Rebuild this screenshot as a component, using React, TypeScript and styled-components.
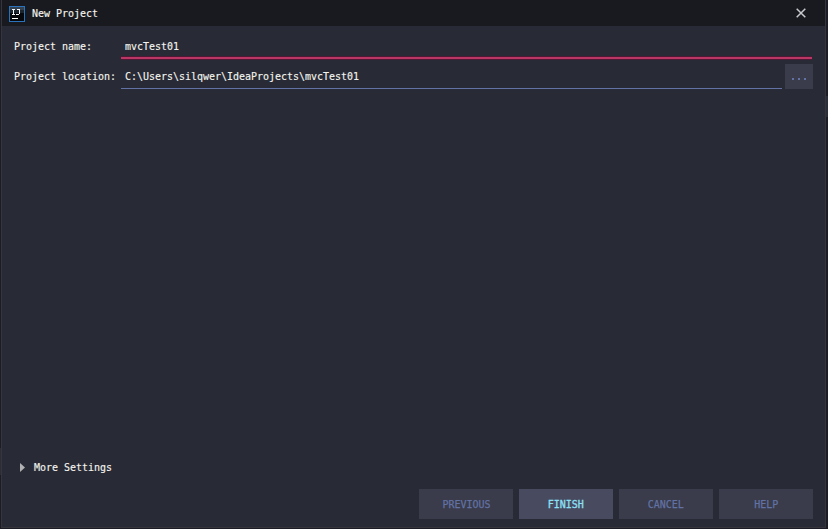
import React from "react";
import styled, { createGlobalStyle } from "styled-components";

const GlobalStyle = createGlobalStyle`
  *, *::before, *::after { box-sizing: border-box; }
  body { margin: 0; background: #1b1c25; overflow: hidden; }
`;

const Desktop = styled.div`
  width: 828px;
  height: 529px;
  display: grid;
  grid-template-columns: 1px 825px 2px;
  background: #1b1c25;
  font-family: "DejaVu Sans Mono", monospace;
  font-size: 11px;
  line-height: 16px;
  color: #f4f4ee;
`;

const Strip = styled.div<{ $top: number; $height: number }>`
  padding-top: ${(p) => p.$top}px;
  &::before {
    content: "";
    display: block;
    height: ${(p) => p.$height}px;
    background: #2b2d38;
  }
`;

const Dialog = styled.main`
  height: 528px;
  display: flex;
  flex-direction: column;
  border: 1px solid #35353b;
  border-top: 0;
  background: #282a35;
`;

const TitleBar = styled.header`
  height: 26px;
  flex: none;
  display: flex;
  align-items: center;
  padding: 1px 19px 0 7px;
  background: #191a20;
`;

const Label = styled.span`
  display: inline-block;
  white-space: pre;
  transform: scaleX(0.906);
  transform-origin: left center;
  -webkit-text-stroke: 0.15px currentColor;
`;

const Title = styled(Label)`
  flex: 1;
  margin-left: 7px;
`;

const CloseButton = styled.button`
  width: 10px;
  height: 10px;
  margin-top: -1px;
  padding: 0;
  border: 0;
  background: none;
  display: flex;
`;

const Form = styled.form`
  flex: 1;
  display: flex;
  flex-direction: column;
  padding: 12px 13px 8px 12px;
`;

const Field = styled.div<{ $height: number; $gap?: number }>`
  display: flex;
  height: ${(p) => p.$height}px;
  margin-bottom: ${(p) => p.$gap ?? 0}px;
`;

const FieldName = styled.label<{ $top: number }>`
  width: 107px;
  flex: none;
  padding-top: ${(p) => p.$top}px;
`;

const Input = styled.div<{ $focused?: boolean; $top: number }>`
  flex: 1;
  padding: ${(p) => p.$top}px 0 0 4px;
  border-bottom: ${(p) => (p.$focused ? "2px solid #b93665" : "1px solid #6272a4")};
  box-shadow: ${(p) => (p.$focused ? "0 1px #4d1934, inset 0 -1px #4d1934" : "none")};
`;

const BrowseButton = styled.button`
  width: 28px;
  height: 25px;
  margin: 0 -1px 0 3px;
  padding: 14px 0 0;
  border: 0;
  background: #3a3c4b;
  display: flex;
  justify-content: center;
  gap: 4px;
`;

const Dot = styled.i`
  width: 2px;
  height: 2px;
  background: #6272a4;
`;

const Settings = styled.div`
  display: flex;
  align-items: center;
  margin-top: auto;
  padding-left: 6px;
  gap: 9px;

  ${Label} { margin: 1px 0 -1px; }
`;

const Actions = styled.div`
  display: flex;
  justify-content: flex-end;
  gap: 6px;
  margin: 14px -1px 0 0;
`;

const Action = styled.button<{ $primary?: boolean }>`
  width: 94px;
  height: 30px;
  padding: 2px 0 0;
  border: 0;
  font: inherit;
  color: ${(p) => (p.$primary ? "#8be0f5" : "#6272a4")};
  background: ${(p) => (p.$primary ? "#484a5f" : "#3a3c4b")};

  ${Label} {
    transform-origin: center;
    -webkit-text-stroke-width: ${(p) => (p.$primary ? "0.35px" : "0.25px")};
  }
`;

const IdeaLogo = () => (
  <svg width="16" height="16" viewBox="0 0 16 16" shapeRendering="crispEdges">
    <rect x="0.5" y="0.5" width="15" height="15" fill="#07080b" stroke="#2b72bd" />
    <path d="M1 1h14v3H1z" fill="#344150" />
    <path d="M1 4h14v3H1z" fill="#1c242e" />
    <path d="M3 3.5h3M4.5 3v6M3 8.5h3M8 3.5h3M10.5 3v5M7 8.5h3" stroke="#f3f6fa" strokeWidth="1" fill="none" />
    <path d="M3 12.5h6" stroke="#fff" strokeWidth="1" />
  </svg>
);

const actions = ["PREVIOUS", "FINISH", "CANCEL", "HELP"];

export default function App() {
  return (
    <>
      <GlobalStyle />
      <Desktop>
        <Strip $top={448} $height={27} />
        <Dialog>
          <TitleBar>
            <IdeaLogo />
            <Title>New Project</Title>
            <CloseButton aria-label="Close">
              <svg width="10" height="10" viewBox="0 0 10 10">
                <path d="M.7.7 9.3 9.3M9.3.7.7 9.3" stroke="#c8c9cf" strokeWidth="1.5" />
              </svg>
            </CloseButton>
          </TitleBar>
          <Form onSubmit={(e) => e.preventDefault()}>
            <Field $height={21} $gap={5}>
              <FieldName $top={1}><Label>Project name:</Label></FieldName>
              <Input $focused $top={1}><Label>mvcTest01</Label></Input>
            </Field>
            <Field $height={25}>
              <FieldName $top={5}><Label>Project location:</Label></FieldName>
              <Input $top={5}><Label>C:\Users\silqwer\IdeaProjects\mvcTest01</Label></Input>
              <BrowseButton type="button" aria-label="Browse"><Dot /><Dot /><Dot /></BrowseButton>
            </Field>
            <Settings>
              <svg width="5" height="9" viewBox="0 0 5 9"><path d="M0 0 5 4.5 0 9z" fill="#b0b1b3" /></svg>
              <Label>More Settings</Label>
            </Settings>
            <Actions>
              {actions.map((name) => (
                <Action key={name} type="button" $primary={name === "FINISH"}>
                  <Label>{name}</Label>
                </Action>
              ))}
            </Actions>
          </Form>
        </Dialog>
        <Strip $top={96} $height={21} />
      </Desktop>
    </>
  );
}
